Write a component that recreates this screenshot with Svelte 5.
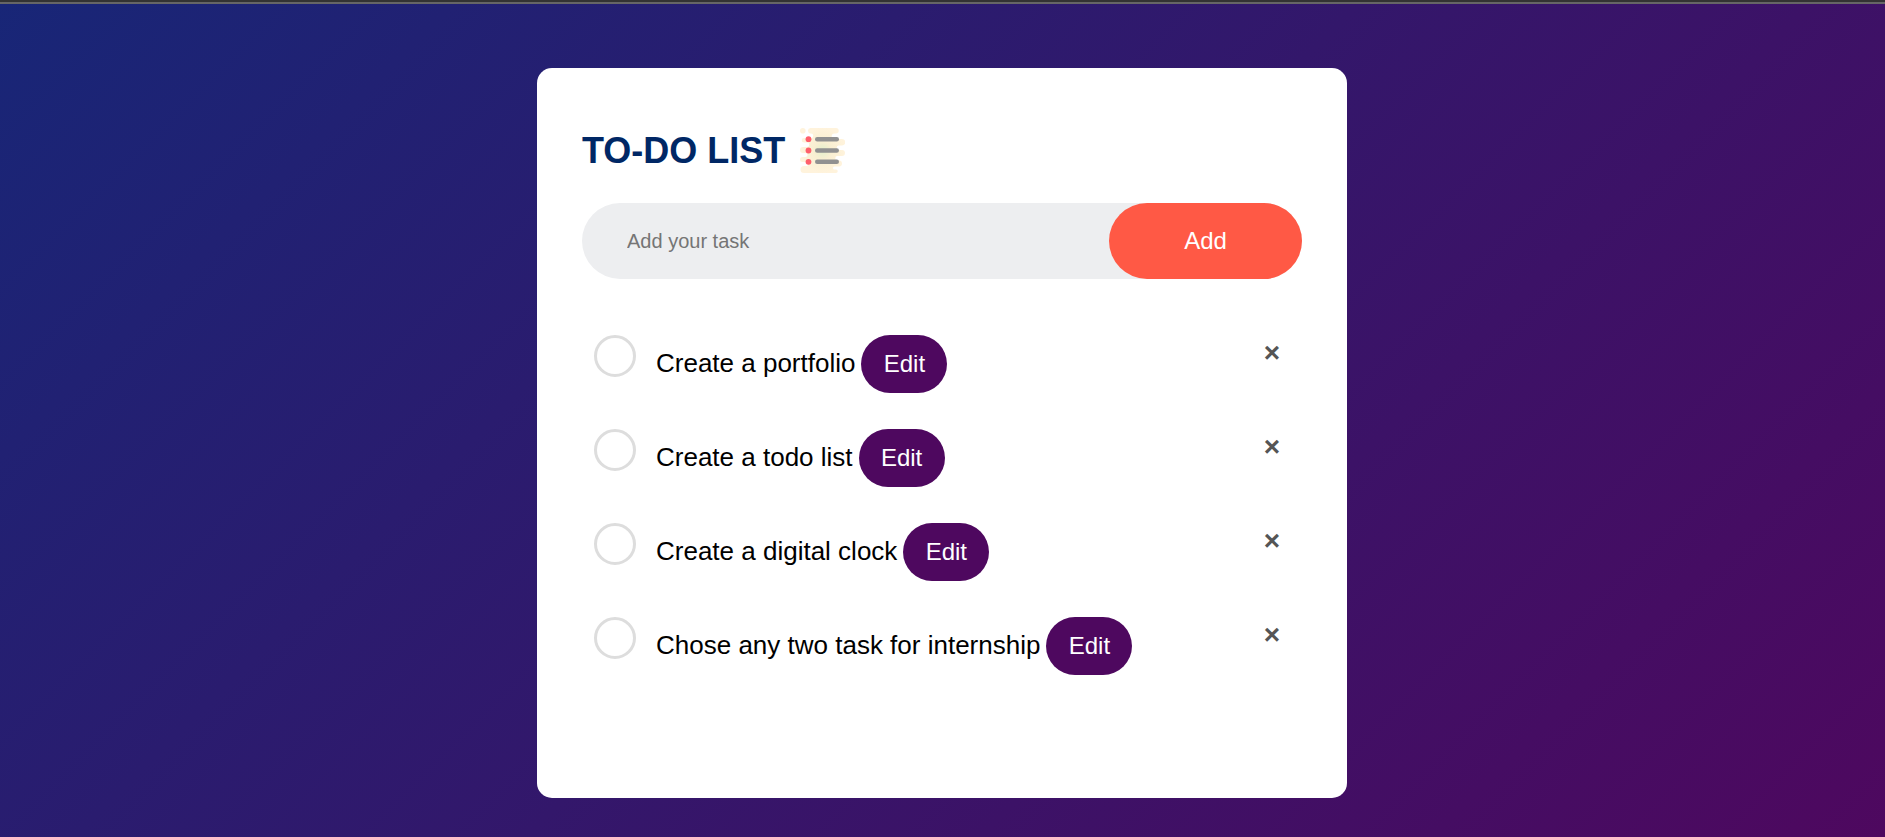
<script>
  let nextId = 5;
  let draft = $state('');
  let tasks = $state([
    { id: 1, text: 'Create a portfolio', done: false },
    { id: 2, text: 'Create a todo list', done: false },
    { id: 3, text: 'Create a digital clock', done: false },
    { id: 4, text: 'Chose any two task for internship', done: false }
  ]);

  function addTask(event) {
    event.preventDefault();
    const text = draft.trim();
    if (!text) return;
    tasks.push({ id: nextId++, text, done: false });
    draft = '';
  }

  function editTask(task) {
    const text = prompt('Edit task', task.text);
    if (text) task.text = text;
  }

  function removeTask(id) {
    tasks = tasks.filter((task) => task.id !== id);
  }
</script>

<div class="page">
  <main class="card">
    <h1>
      TO-DO LIST
      <svg class="logo" viewBox="0 0 45 45" aria-hidden="true">
        <defs>
          <radialGradient id="glow">
            <stop offset="0" stop-color="#e3efcb" />
            <stop offset="0.4" stop-color="#f9efd2" />
            <stop offset="1" stop-color="#fff3dc" />
          </radialGradient>
        </defs>
        <path
          fill="url(#glow)"
          d="M10.500 0H36a2.700 2.700 0 0 1 0 5.400H34.500a2.800 2.800 0 0 0 0 5.600H42a3.100 3.100 0 0 1 0 6.500H38.500a2.300 2.300 0 0 0 0 4.500H42a3 3 0 0 1 0 6H37.500a2 2 0 0 0 0 4.500H39a3 3 0 0 1 0 6H34.500a1.500 1.500 0 0 0 0 3H36a1.750 1.750 0 0 1 0 3.500H4a3.500 3.500 0 0 1 0-7H7a2.200 2.200 0 0 0 0-4H2.500a2.500 2.500 0 0 1 0-5H5.500a2 2 0 0 0 0-4H3a3 3 0 0 1 0-6H7a2 2 0 0 0 0-4.500H4a2.200 2.200 0 0 1 0-4.500H11a2.200 2.200 0 0 0 0-4.500A2.700 2.700 0 0 1 10.500 0Z"
        />
        <circle cx="2.800" cy="2.800" r="2.800" fill="#fff3dc" />
        <g fill="#ff5f6b">
          <circle cx="8.500" cy="11.200" r="2.900" />
          <circle cx="8.500" cy="22.500" r="2.900" />
          <circle cx="8.500" cy="33.800" r="2.900" />
        </g>
        <g fill="#919191">
          <rect x="15" y="9" width="24" height="4.400" rx="2.200" />
          <rect x="15" y="20.300" width="24" height="4.400" rx="2.200" />
          <rect x="15" y="31.600" width="24" height="4.400" rx="2.200" />
        </g>
      </svg>
    </h1>

    <form onsubmit={addTask}>
      <input class="draft" type="text" placeholder="Add your task" aria-label="Add your task" bind:value={draft} />
      <button class="add" type="submit">Add</button>
    </form>

    <ul>
      {#each tasks as task (task.id)}
        <li>
          <input class="tick" type="checkbox" id="task-{task.id}" bind:checked={task.done} />
          <label class:done={task.done} for="task-{task.id}">{task.text}</label>
          <button class="edit" type="button" onclick={() => editTask(task)}>Edit</button>
          <button class="remove" type="button" aria-label="Remove {task.text}" onclick={() => removeTask(task.id)}>×</button>
        </li>
      {/each}
    </ul>
  </main>
</div>

<style>
  :global(body) {
    margin: 0;
  }

  .page {
    box-sizing: border-box;
    min-height: 100vh;
    padding: 66px 17px 39px 16px;
    border-top: 2px solid #333;
    background:
      linear-gradient(#666, #666) top / 100% 2px no-repeat,
      linear-gradient(135deg, #182677, #4e085f);
    font-family: "Liberation Sans", Arial, sans-serif;
  }

  .card {
    box-sizing: border-box;
    max-width: 810px;
    margin: 0 auto;
    padding: 60px 45px 123px;
    border-radius: 15px;
    background: #fff;
  }

  h1 {
    display: flex;
    align-items: center;
    gap: 15px;
    margin: 0 0 30px;
    color: #002765;
    font-size: 36px;
    line-height: 45px;
  }

  .logo {
    width: 45px;
    height: 45px;
  }

  button,
  input {
    margin: 0;
    border: 0;
    font-family: inherit;
  }

  button {
    cursor: pointer;
  }

  form {
    display: flex;
    margin-bottom: 56px;
    border-radius: 38px;
    background: #edeef0;
  }

  .draft {
    flex: 1;
    min-width: 0;
    padding: 0 45px;
    outline: 0;
    background: transparent;
    font-size: 20px;
  }

  .draft::placeholder {
    color: #757575;
  }

  .add {
    width: 193px;
    height: 76px;
    border-radius: 38px;
    background: #ff5945;
    color: #fff;
    font-size: 24px;
  }

  ul {
    display: grid;
    gap: 36px;
    margin: 0;
    padding: 0 0 0 12px;
    list-style: none;
  }

  li {
    display: flex;
    align-items: flex-start;
  }

  .tick {
    flex: none;
    width: 42px;
    height: 42px;
    margin-right: 20px;
    border: 3px solid #ddd;
    border-radius: 50%;
    appearance: none;
    cursor: pointer;
  }

  .tick:checked {
    border-color: #ff5945;
    background: #ff5945;
  }

  label {
    margin-right: 6px;
    font-size: 26px;
    line-height: 56px;
    cursor: pointer;
  }

  .done {
    color: #555;
    text-decoration: line-through;
  }

  .edit {
    flex: none;
    width: 86px;
    height: 58px;
    padding: 0;
    border-radius: 29px;
    background: #4e085f;
    color: #fff;
    font-size: 24px;
  }

  .remove {
    flex: none;
    width: 60px;
    height: 36px;
    margin-left: auto;
    padding: 0;
    background: transparent;
    color: #555;
    font-size: 28px;
    font-weight: 700;
    line-height: 36px;
  }
</style>
